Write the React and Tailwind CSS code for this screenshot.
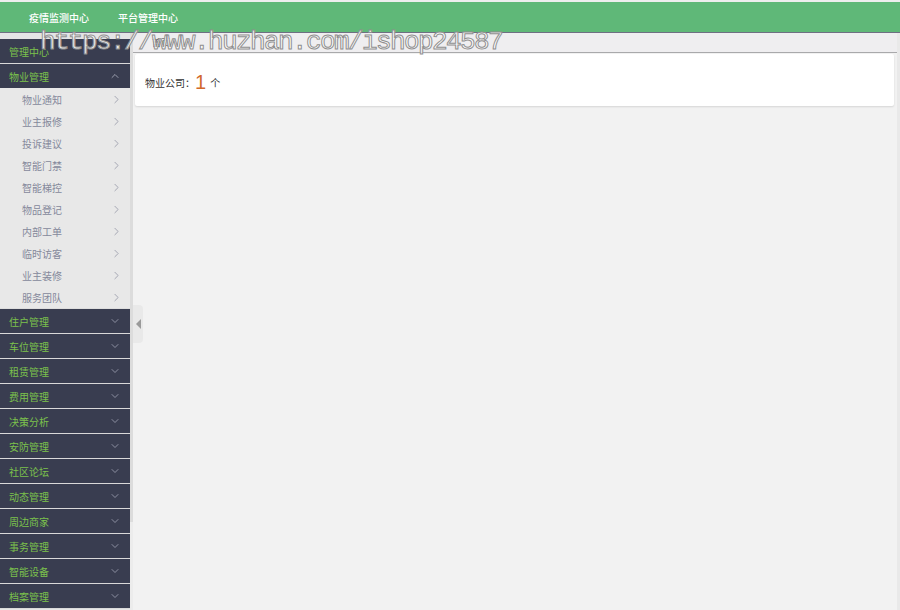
import { ChevronRight, ChevronDown, ChevronUp } from "lucide-react";

const subItems = ["物业通知", "业主报修", "投诉建议", "智能门禁", "智能梯控", "物品登记", "内部工单", "临时访客", "业主装修", "服务团队"];
const groups = ["住户管理", "车位管理", "租赁管理", "费用管理", "决策分析", "安防管理", "社区论坛", "动态管理", "周边商家", "事务管理", "智能设备", "档案管理"];

export default function App() {
  return (
    <div
      className="relative w-[900px] h-[610px] overflow-hidden bg-[#f2f2f2] flex flex-col"
      style={{ fontFamily: '"Microsoft YaHei", "Noto Sans CJK SC", sans-serif' }}
    >
      {/* Header */}
      <div className="h-[2px] bg-[#eeeeee]" />
      <div className="h-[30px] bg-[#5fb878] flex items-center pl-[29px] gap-[29px] text-white text-[10px] font-medium">
        <span>疫情监测中心</span>
        <span>平台管理中心</span>
      </div>
      <div className="h-px bg-[#6e6f82]" />

      <div className="flex flex-1 min-h-0">
        {/* Sidebar */}
        <div className="w-[130px] flex flex-col bg-[#e6e6e6] text-[10px]">
          <div className="h-[6px] bg-[#e4e4e6]" />
          <div className="h-[24px] bg-[#393d50] flex items-center pl-[9px] text-[#7cc24c]">管理中心</div>
          <div className="h-px bg-[#d9d9d9]" />
          <div className="h-[24px] bg-[#393d50] flex items-center justify-between pl-[9px] pr-[9px] text-[#7cc24c]">
            <span>物业管理</span>
            <ChevronUp className="w-3 h-3 text-[#b9bccb]" strokeWidth={1.5} />
          </div>
          <div className="flex flex-col bg-[#e8e8e8]">
            {subItems.map((s) => (
              <div key={s} className="h-[22px] flex items-center justify-between pl-[22px] pr-[7px] text-[#85889b]">
                <span>{s}</span>
                <ChevronRight className="w-[13px] h-[13px] text-[#9597a6]" strokeWidth={1.5} />
              </div>
            ))}
          </div>
          <div className="h-px bg-[#dddddd]" />
          {groups.map((g) => (
            <div key={g} className="flex flex-col">
              <div className="h-[24px] bg-[#393d50] flex items-center justify-between pl-[9px] pr-[9px] text-[#7cc24c]">
                <span>{g}</span>
                <ChevronDown className="w-3 h-3 text-[#a7aabb]" strokeWidth={1.5} />
              </div>
              <div className="h-px bg-[#d9d9d9]" />
            </div>
          ))}
        </div>

        {/* Sidebar scrollbar */}
        <div className="w-[3px] bg-[#ececec] flex flex-col">
          <div className="h-[489px] bg-[#dcdcdc]" />
        </div>

        {/* Main */}
        <div className="flex-1 flex flex-col min-w-0">
          <div className="h-[20px] bg-[#efeef0] border-b border-[#a9a9ab] flex items-end pl-[19px]">
            <span className="text-[9px] leading-[16px] text-[#333] mb-[1px]">首页</span>
          </div>
          <div className="flex pl-[2px] pr-[3px] pt-px">
            <div className="flex-1 h-[52px] bg-white rounded-[2px] shadow-[0_1px_2px_rgba(0,0,0,0.12)] flex items-center pl-[10px] pt-[4px] text-[10px] text-[#333]">
              <span>物业公司：</span>
              <span
                className="text-[20px] leading-none text-[#d2692b] mr-[4px]"
                style={{ fontFamily: '"Liberation Sans", Arial, sans-serif' }}
              >
                1
              </span>
              <span>个</span>
            </div>
          </div>
        </div>
        <div className="w-[3px] bg-[#e9e9e9]" />
      </div>

      {/* Sidebar collapse tab */}
      <div className="absolute left-[133px] top-[305px] w-[10px] h-[38px] bg-[#e9e9e9] rounded-r-[4px] flex items-center justify-center">
        <div className="w-0 h-0 border-y-[5px] border-y-transparent border-r-[5px] border-r-[#9a9a9a]" />
      </div>

      {/* Watermark */}
      <div
        className="absolute left-[40px] top-[25px] text-[26px] leading-[34px] tracking-[-1.6px] text-white/90 [-webkit-text-stroke:1px_#8f8f8f] pointer-events-none whitespace-nowrap"
        style={{ fontFamily: '"Liberation Mono", monospace' }}
      >
        https://www.huzhan.com/ishop24587
      </div>
    </div>
  );
}
